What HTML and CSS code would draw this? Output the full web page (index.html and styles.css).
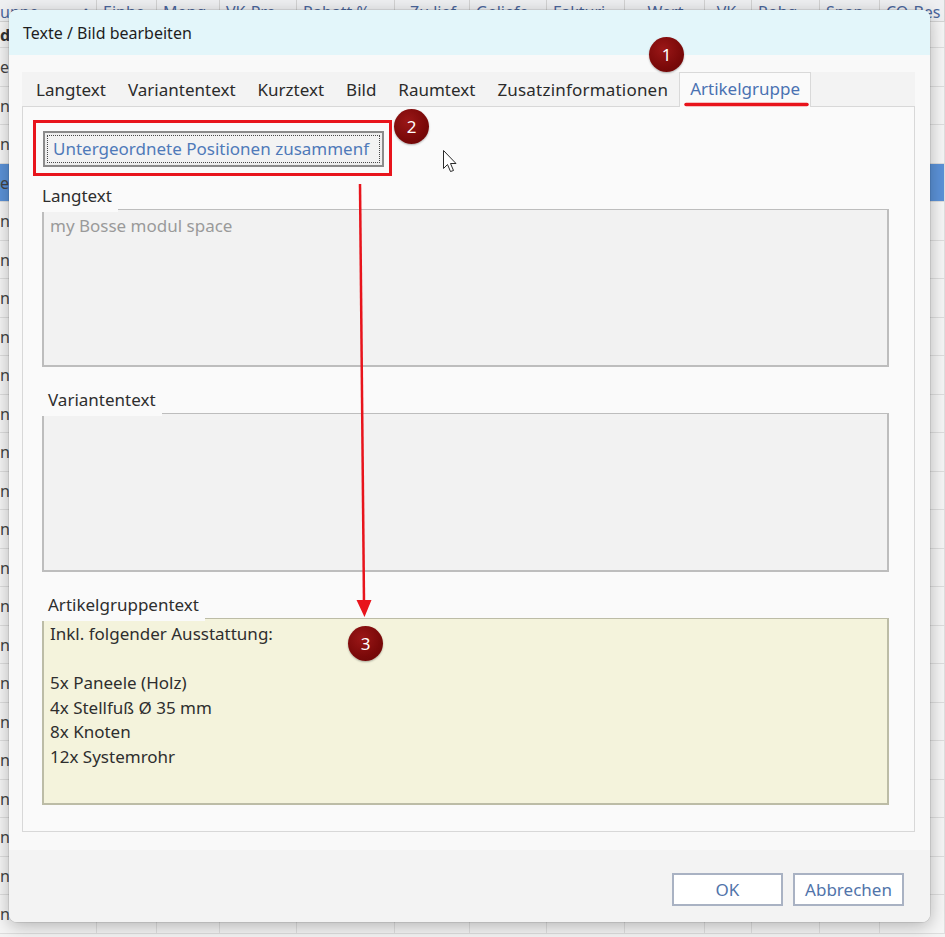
FILE: index.html
```html
<!DOCTYPE html>
<html lang="de">
<head>
<meta charset="utf-8">
<title>Texte / Bild bearbeiten</title>
<link rel="stylesheet" href="styles.css">
</head>
<body>
<div class="desk">
  <div class="grid-head">
    <div class="hc first"><span>uppe</span><span class="sort">∧</span></div>
    <div class="hc">Einhe</div>
    <div class="hc">Meng</div>
    <div class="hc">VK-Pre</div>
    <div class="hc">Rabatt %</div>
    <div class="hc c">Zu lief</div>
    <div class="hc">Geliefe</div>
    <div class="hc">Fakturi</div>
    <div class="hc c">Wert</div>
    <div class="hc c">VK-</div>
    <div class="hc">Rohg</div>
    <div class="hc">Span</div>
    <div class="hc">CO-Bes</div>
  </div>
  <div class="grid-rows">
    <div class="gr short bold"><div class="gc">d</div><div class="gc"></div><div class="gc"></div><div class="gc"></div><div class="gc"></div><div class="gc"></div><div class="gc"></div><div class="gc"></div><div class="gc"></div><div class="gc"></div><div class="gc"></div><div class="gc"></div><div class="gc"></div></div>
    <div class="gr"><div class="gc">e</div><div class="gc"></div><div class="gc"></div><div class="gc"></div><div class="gc"></div><div class="gc"></div><div class="gc"></div><div class="gc"></div><div class="gc"></div><div class="gc"></div><div class="gc"></div><div class="gc"></div><div class="gc"></div></div>
    <div class="gr"><div class="gc">n</div><div class="gc"></div><div class="gc"></div><div class="gc"></div><div class="gc"></div><div class="gc"></div><div class="gc"></div><div class="gc"></div><div class="gc"></div><div class="gc"></div><div class="gc"></div><div class="gc"></div><div class="gc"></div></div>
    <div class="gr"><div class="gc">n</div><div class="gc"></div><div class="gc"></div><div class="gc"></div><div class="gc"></div><div class="gc"></div><div class="gc"></div><div class="gc"></div><div class="gc"></div><div class="gc"></div><div class="gc"></div><div class="gc"></div><div class="gc"></div></div>
    <div class="gr sel"><div class="gc">e</div><div class="gc"></div><div class="gc"></div><div class="gc"></div><div class="gc"></div><div class="gc"></div><div class="gc"></div><div class="gc"></div><div class="gc"></div><div class="gc"></div><div class="gc"></div><div class="gc"></div><div class="gc"></div></div>
    <div class="gr"><div class="gc">n</div><div class="gc"></div><div class="gc"></div><div class="gc"></div><div class="gc"></div><div class="gc"></div><div class="gc"></div><div class="gc"></div><div class="gc"></div><div class="gc"></div><div class="gc"></div><div class="gc"></div><div class="gc"></div></div>
    <div class="gr"><div class="gc">n</div><div class="gc"></div><div class="gc"></div><div class="gc"></div><div class="gc"></div><div class="gc"></div><div class="gc"></div><div class="gc"></div><div class="gc"></div><div class="gc"></div><div class="gc"></div><div class="gc"></div><div class="gc"></div></div>
    <div class="gr"><div class="gc">n</div><div class="gc"></div><div class="gc"></div><div class="gc"></div><div class="gc"></div><div class="gc"></div><div class="gc"></div><div class="gc"></div><div class="gc"></div><div class="gc"></div><div class="gc"></div><div class="gc"></div><div class="gc"></div></div>
    <div class="gr"><div class="gc">n</div><div class="gc"></div><div class="gc"></div><div class="gc"></div><div class="gc"></div><div class="gc"></div><div class="gc"></div><div class="gc"></div><div class="gc"></div><div class="gc"></div><div class="gc"></div><div class="gc"></div><div class="gc"></div></div>
    <div class="gr"><div class="gc">n</div><div class="gc"></div><div class="gc"></div><div class="gc"></div><div class="gc"></div><div class="gc"></div><div class="gc"></div><div class="gc"></div><div class="gc"></div><div class="gc"></div><div class="gc"></div><div class="gc"></div><div class="gc"></div></div>
    <div class="gr"><div class="gc">n</div><div class="gc"></div><div class="gc"></div><div class="gc"></div><div class="gc"></div><div class="gc"></div><div class="gc"></div><div class="gc"></div><div class="gc"></div><div class="gc"></div><div class="gc"></div><div class="gc"></div><div class="gc"></div></div>
    <div class="gr"><div class="gc">n</div><div class="gc"></div><div class="gc"></div><div class="gc"></div><div class="gc"></div><div class="gc"></div><div class="gc"></div><div class="gc"></div><div class="gc"></div><div class="gc"></div><div class="gc"></div><div class="gc"></div><div class="gc"></div></div>
    <div class="gr"><div class="gc">n</div><div class="gc"></div><div class="gc"></div><div class="gc"></div><div class="gc"></div><div class="gc"></div><div class="gc"></div><div class="gc"></div><div class="gc"></div><div class="gc"></div><div class="gc"></div><div class="gc"></div><div class="gc"></div></div>
    <div class="gr"><div class="gc">n</div><div class="gc"></div><div class="gc"></div><div class="gc"></div><div class="gc"></div><div class="gc"></div><div class="gc"></div><div class="gc"></div><div class="gc"></div><div class="gc"></div><div class="gc"></div><div class="gc"></div><div class="gc"></div></div>
    <div class="gr"><div class="gc">n</div><div class="gc"></div><div class="gc"></div><div class="gc"></div><div class="gc"></div><div class="gc"></div><div class="gc"></div><div class="gc"></div><div class="gc"></div><div class="gc"></div><div class="gc"></div><div class="gc"></div><div class="gc"></div></div>
    <div class="gr"><div class="gc">n</div><div class="gc"></div><div class="gc"></div><div class="gc"></div><div class="gc"></div><div class="gc"></div><div class="gc"></div><div class="gc"></div><div class="gc"></div><div class="gc"></div><div class="gc"></div><div class="gc"></div><div class="gc"></div></div>
    <div class="gr"><div class="gc">n</div><div class="gc"></div><div class="gc"></div><div class="gc"></div><div class="gc"></div><div class="gc"></div><div class="gc"></div><div class="gc"></div><div class="gc"></div><div class="gc"></div><div class="gc"></div><div class="gc"></div><div class="gc"></div></div>
    <div class="gr"><div class="gc">n</div><div class="gc"></div><div class="gc"></div><div class="gc"></div><div class="gc"></div><div class="gc"></div><div class="gc"></div><div class="gc"></div><div class="gc"></div><div class="gc"></div><div class="gc"></div><div class="gc"></div><div class="gc"></div></div>
    <div class="gr"><div class="gc">n</div><div class="gc"></div><div class="gc"></div><div class="gc"></div><div class="gc"></div><div class="gc"></div><div class="gc"></div><div class="gc"></div><div class="gc"></div><div class="gc"></div><div class="gc"></div><div class="gc"></div><div class="gc"></div></div>
    <div class="gr"><div class="gc">n</div><div class="gc"></div><div class="gc"></div><div class="gc"></div><div class="gc"></div><div class="gc"></div><div class="gc"></div><div class="gc"></div><div class="gc"></div><div class="gc"></div><div class="gc"></div><div class="gc"></div><div class="gc"></div></div>
    <div class="gr"><div class="gc">n</div><div class="gc"></div><div class="gc"></div><div class="gc"></div><div class="gc"></div><div class="gc"></div><div class="gc"></div><div class="gc"></div><div class="gc"></div><div class="gc"></div><div class="gc"></div><div class="gc"></div><div class="gc"></div></div>
    <div class="gr"><div class="gc">n</div><div class="gc"></div><div class="gc"></div><div class="gc"></div><div class="gc"></div><div class="gc"></div><div class="gc"></div><div class="gc"></div><div class="gc"></div><div class="gc"></div><div class="gc"></div><div class="gc"></div><div class="gc"></div></div>
    <div class="gr"><div class="gc">n</div><div class="gc"></div><div class="gc"></div><div class="gc"></div><div class="gc"></div><div class="gc"></div><div class="gc"></div><div class="gc"></div><div class="gc"></div><div class="gc"></div><div class="gc"></div><div class="gc"></div><div class="gc"></div></div>
    <div class="gr"><div class="gc">n</div><div class="gc"></div><div class="gc"></div><div class="gc"></div><div class="gc"></div><div class="gc"></div><div class="gc"></div><div class="gc"></div><div class="gc"></div><div class="gc"></div><div class="gc"></div><div class="gc"></div><div class="gc"></div></div>
  </div>
</div>

<div class="dialog">
  <div class="titlebar">Texte / Bild bearbeiten</div>
  <div class="main">
    <div class="tabs">
      <div class="tab">Langtext</div>
      <div class="tab">Variantentext</div>
      <div class="tab">Kurztext</div>
      <div class="tab">Bild</div>
      <div class="tab">Raumtext</div>
      <div class="tab wide">Zusatzinformationen</div>
      <div class="tab active">Artikelgruppe</div>
    </div>
    <div class="panel">
      <button class="merge"><span class="focus">Untergeordnete Positionen zusammenf</span></button>
      <div class="group g-lang">
        <div class="glabel">Langtext</div>
        <div class="gbox readonly">my Bosse modul space</div>
      </div>
      <div class="group g-var">
        <div class="glabel">Variantentext</div>
        <div class="gbox readonly"></div>
      </div>
      <div class="group g-art">
        <div class="glabel">Artikelgruppentext</div>
        <div class="gbox yellow">Inkl. folgender Ausstattung:<br><br>5x Paneele (Holz)<br>4x Stellfuß Ø 35 mm<br>8x Knoten<br>12x Systemrohr</div>
      </div>
    </div>
  </div>
  <div class="footer">
    <button class="btn">OK</button>
    <button class="btn">Abbrechen</button>
  </div>
</div>

<svg class="annot" width="945" height="937" viewBox="0 0 945 937">
  <rect x="34.5" y="121.5" width="356" height="53" fill="none" stroke="#e8141c" stroke-width="3"/>
  <line x1="686" y1="104.5" x2="807" y2="104.5" stroke="#e8141c" stroke-width="3.5" stroke-linecap="round"/>
  <line x1="360" y1="184" x2="364" y2="603" stroke="#e8141c" stroke-width="2.5"/>
  <polygon points="356.5,600 371.5,600 364.5,617" fill="#e8141c"/>
  <path d="M443.5 150.5 L443.5 168.5 L447.5 164.5 L450.5 171.5 L453.5 170.5 L450.5 163.5 L456 163.5 Z" fill="#ffffff" stroke="#2a2a2a" stroke-width="1" stroke-linejoin="round"/>
</svg>
<div class="badge b1">1</div>
<div class="badge b2">2</div>
<div class="badge b3">3</div>
</body>
</html>
```

FILE: styles.css
```css
* { box-sizing: border-box; }

body {
  margin: 0;
  width: 945px;
  height: 937px;
  overflow: hidden;
  position: relative;
  background: #f4f4f4;
  font-family: "Noto Sans", "Open Sans", sans-serif;
}

/* background grid */
.desk { width: 945px; }
.grid-head, .gr {
  display: grid;
  grid-template-columns: 97px 60px 63px 77px 98px 75px 77px 78px 80px 47px 68px 60px 65px;
}
.grid-head {
  height: 22px;
  background: #eff0f2;
  border-bottom: 1px solid #d4d4d4;
}
.hc {
  border-right: 1px solid #d3d3d3;
  font-size: 16px;
  line-height: 24px;
  color: #4a669c;
  white-space: nowrap;
  overflow: hidden;
  padding: 0 4px 0 6px;
}
.hc.first { display: flex; justify-content: space-between; padding-left: 0; }
.hc.c { text-align: center; }
.sort { padding-right: 0; }
.gr {
  height: 38.5px;
  background: #f6f6f6;
  border-bottom: 1px solid #dedede;
}
.gr.short { height: 26px; }
.gr.sel { background: #5b92d8; }
.gc {
  border-right: 1px solid #e0e0e0;
  font-size: 16px;
  line-height: 38px;
  color: #444;
  overflow: hidden;
  white-space: nowrap;
}
.gr.short .gc { line-height: 26px; }
.gr.bold .gc { font-weight: 700; color: #333; }

/* dialog window */
.dialog {
  position: absolute;
  z-index: 1;
  left: 9px;
  top: 10px;
  width: 921px;
  height: 912px;
  border-radius: 8px;
  background: #f9f9f9;
  box-shadow: 0 4px 18px rgba(0, 0, 0, 0.28), 0 0 0 1px rgba(0, 0, 0, 0.08);
  display: flex;
  flex-direction: column;
  overflow: hidden;
}
.titlebar {
  height: 45px;
  flex: none;
  background: #e3f6fa;
  display: flex;
  align-items: center;
  padding-left: 14px;
  padding-top: 1px;
  font-size: 16px;
  color: #1e1e1e;
}
.main {
  flex: 1;
  padding: 17px 15px 0 13px;
  background: #f9f9f9;
}
.tabs {
  display: flex;
  height: 34px;
  background: #f3f3f3;
  padding-left: 3px;
  position: relative;
  z-index: 1;
}
.tab {
  padding: 0 10px;
  font-size: 17px;
  line-height: 34px;
  color: #2b2b2b;
  white-space: nowrap;
  border: 1px solid transparent;
  border-bottom: 0;
}
.tab.wide { letter-spacing: 0.2px; }
.tab.active {
  color: #4a72b2;
  background: #fafafa;
  border-color: #d9d9d9;
  height: 35px;
  line-height: 32px;
}
.panel {
  height: 726px;
  border: 1px solid #d8d8d8;
  background: #fafafa;
  padding: 24px 25px 0 19px;
}
.merge {
  display: block;
  width: 341px;
  height: 36px;
  margin: 0 0 0 1px;
  padding: 2px;
  border: 2px solid #8b8b8b;
  background: #eeeeee;
  font-family: inherit;
  overflow: hidden;
}
.focus {
  display: block;
  height: 28px;
  border: 1px dotted #4a4a4a;
  background: #f3f3f3;
  color: #4f7ab9;
  font-size: 17px;
  line-height: 25px;
  text-align: left;
  padding-left: 5px;
  white-space: nowrap;
  overflow: hidden;
}
.group { display: flex; flex-direction: column; }
.g-lang { margin-top: 18px; }
.g-var { margin-top: 22px; }
.g-art { margin-top: 22px; }
.glabel {
  align-self: flex-start;
  position: relative;
  z-index: 1;
  background: #fafafa;
  font-size: 17px;
  line-height: 21px;
  color: #2e2e2e;
  padding-right: 6px;
  margin-bottom: -3px;
  height: 27px;
}
.g-var .glabel, .g-art .glabel { padding-left: 6px; }
.gbox {
  border: 1px solid #bdbdbd;
  border-width: 1px 2px 2px 2px;
  font-size: 17px;
  color: #2e2e2e;
}
.readonly {
  height: 158px;
  background: #f2f2f2;
  color: #9a9a9a;
  padding: 4px 6px;
  line-height: 24px;
}
.g-var .readonly { height: 159px; }
.yellow {
  height: 187px;
  background: #f4f3dc;
  border-color: #bcbca6;
  padding: 3px 6px;
  line-height: 24.6px;
}

.footer {
  height: 72px;
  flex: none;
  background: #f3f3f3;
  display: flex;
  justify-content: flex-end;
  align-items: flex-start;
  gap: 10px;
  padding: 23px 26px 0 0;
}
.btn {
  width: 111px;
  height: 33px;
  border: 2px solid #a9b2c3;
  background: #ffffff;
  color: #5174aa;
  font-family: inherit;
  font-size: 17px;
  padding: 0;
}

/* annotations */
.annot {
  position: absolute;
  z-index: 5;
  left: 0;
  top: 0;
  pointer-events: none;
}
.badge {
  position: absolute;
  z-index: 6;
  width: 35px;
  height: 35px;
  border-radius: 50%;
  background: radial-gradient(circle at 40% 35%, #9b1717 0%, #7a0909 60%, #660505 100%);
  color: #ffffff;
  font-size: 17px;
  line-height: 35px;
  text-align: center;
  box-shadow: 0 1px 2px rgba(0, 0, 0, 0.3);
}
.b1 { left: 649px; top: 37px; }
.b2 { left: 394px; top: 109px; }
.b3 { left: 348px; top: 626px; }
```
